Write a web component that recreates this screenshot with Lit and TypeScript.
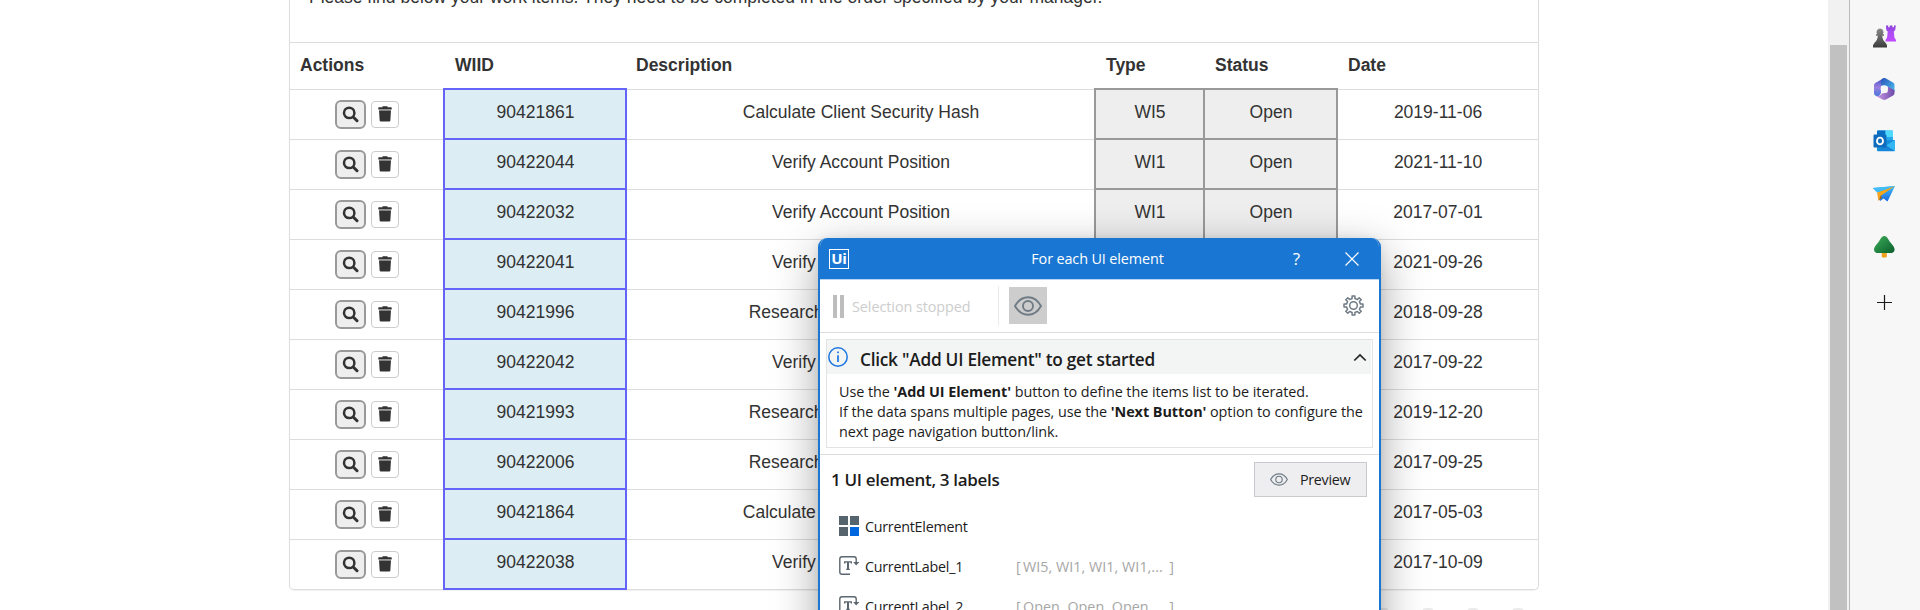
import { LitElement, html, css, svg } from "lit";
import { customElement, property } from "lit/decorators.js";

type Item = { id: string; desc: string; type: string; date: string };

const ITEMS: Item[] = [
  { id: "90421861", desc: "Calculate Client Security Hash", type: "WI5", date: "2019-11-06" },
  { id: "90422044", desc: "Verify Account Position", type: "WI1", date: "2021-11-10" },
  { id: "90422032", desc: "Verify Account Position", type: "WI1", date: "2017-07-01" },
  { id: "90422041", desc: "Verify Account Position", type: "WI1", date: "2021-09-26" },
  { id: "90421996", desc: "Research Client Check Copy", type: "WI3", date: "2018-09-28" },
  { id: "90422042", desc: "Verify Account Position", type: "WI1", date: "2017-09-22" },
  { id: "90421993", desc: "Research Client Check Copy", type: "WI3", date: "2019-12-20" },
  { id: "90422006", desc: "Research Client Check Copy", type: "WI3", date: "2017-09-25" },
  { id: "90421864", desc: "Calculate Client Security Hash", type: "WI5", date: "2017-05-03" },
  { id: "90422038", desc: "Verify Account Position", type: "WI1", date: "2017-10-09" },
];

const eye = (w: number, h: number, sw: number) => html`
  <svg width=${w} height=${h} viewBox="0 0 28 20" fill="none" stroke="#6f7b85" stroke-width=${sw}>
    <path d="M1 10C4 4.6 8.6 1.2 14 1.2S24 4.6 27 10C24 15.400 19.400 18.800 14 18.800S4 15.400 1 10Z" />
    <circle cx="14" cy="10" r="5" />
  </svg>`;

/** Outline of a toothed wheel with the given number of teeth. */
const gearPath = (teeth: number, outer: number, inner: number) => {
  const pts: string[] = [];
  const step = (Math.PI * 2) / teeth;
  for (let i = 0; i < teeth; i++) {
    const a = i * step - Math.PI / 2;
    for (const [off, r] of [[-0.25, inner], [-0.19, outer], [0.19, outer], [0.25, inner]]) {
      const t = a + off * step;
      pts.push(`${(10.5 + Math.cos(t) * r).toFixed(2)} ${(10.5 + Math.sin(t) * r).toFixed(2)}`);
    }
  }
  return `M${pts.join("L")}Z`;
};

@customElement("work-items")
class WorkItems extends LitElement {
  static styles = css`
    :host { display: block; font: 17.5px/25px "Liberation Sans", Arial, sans-serif; color: #333; }
    .panel { border: 1px solid #ddd; border-top: 0; border-radius: 0 0 5px 5px; box-shadow: 0 1px 1px rgba(0, 0, 0, .06); }
    .intro { height: 42px; display: flex; flex-direction: column; justify-content: flex-end; padding: 0 0 32px 19px; box-sizing: border-box; white-space: nowrap; }
    .row { display: grid; grid-template-columns: 154px 182px 469px 109px 133px 201px; height: 50px; }
    .row.head { height: 47px; font-weight: bold; }
    .cell { border-top: 1px solid #ddd; padding: 10px 10px 0 11px; text-align: center; white-space: nowrap; }
    .head .cell { text-align: left; }
    .head .cell:first-child, .head .cell:nth-child(3) { padding-left: 10px; }
    .key { background: #dcedf3; border-top-color: #6464f8; border-bottom: 1px solid #6464f8; box-shadow: 0 0 0 1px #6464f8, inset 1px 0 0 #6464f8, inset -1px 0 0 #6464f8; }
    .label { background: #eee; border-top-color: #999; border-bottom: 1px solid #999; box-shadow: 0 0 0 1px #999, inset 1px 0 0 #999, inset -1px 0 0 #999; }
    .key, .label { position: relative; margin-bottom: 0; }
    .actions { display: flex; gap: 5px; align-items: flex-start; padding: 10px 0 0 45px; }
    .btn { box-sizing: border-box; display: grid; place-items: center; }
    .view { width: 31px; height: 29px; border: 2px solid #999; border-radius: 6px; background: #eee; }
    .del { width: 28px; height: 27px; margin-top: 1px; border: 1px solid #ccc; border-radius: 4px; background: #fff; }
    svg { display: block; margin-top: -1px; }
    .del svg { margin-top: -2px; }
    .pager { display: flex; justify-content: flex-end; gap: 33px; padding: 18px 15px 0 0; }
    .dot { width: 12px; height: 8px; border-radius: 6px; background: #ebebeb; }
  `;
  render() {
    return html`
      <div class="panel">
        <div class="intro">Please find below your work items. They need to be completed in the order specified by your manager.</div>
        <div class="row head">
          ${["Actions", "WIID", "Description", "Type", "Status", "Date"].map((h) => html`<div class="cell">${h}</div>`)}
        </div>
        ${ITEMS.map((i) => html`
          <div class="row">
            <div class="cell actions">
              <span class="btn view">
                <svg width="17" height="17" viewBox="0 0 17 17" fill="none" stroke="#333">
                  <circle cx="7.200" cy="6.900" r="5.200" stroke-width="2.500" />
                  <path d="M11.200 11L15 14.700" stroke-width="3" stroke-linecap="round" />
                </svg>
              </span>
              <span class="btn del">
                <svg width="14" height="16" viewBox="0 0 14 16" fill="#333">
                  <path d="M4.500 1.200V.3h5v.9H13.200q.5 0 .5.800v1.400H.3V2q0-.8.5-.8Z" />
                  <path d="M1 3.400H13V4.400H1Z" fill="#999" />
                  <path d="M1 4.400h12l-.7 10.300q-.1.800-1 .8H2.700q-.9 0-1-.8Z" />
                </svg>
              </span>
            </div>
            <div class="cell key">${i.id}</div>
            <div class="cell">${i.desc}</div>
            <div class="cell label">${i.type}</div>
            <div class="cell label">Open</div>
            <div class="cell">${i.date}</div>
          </div>`)}
      </div>
      <div class="pager">${[0, 1, 2, 3].map(() => html`<i class="dot"></i>`)}</div>`;
  }
}

@customElement("label-row")
class LabelRow extends LitElement {
  @property() name = "";
  @property() sample = "";
  static styles = css`
    :host { display: flex; align-items: center; height: 40px; padding-left: 19px; color: #1c1c1c; font-size: 14.300px; letter-spacing: -.25px; white-space: nowrap; }
    svg { display: block; flex: none; width: 20px; height: 20px; margin-right: 6px; }
    .name { width: 151px; padding-top: 1px; }
    .sample { color: #a6a6a6; width: 158px; display: flex; padding-top: 1px; letter-spacing: .05px; }
    .open { width: 7px; }
    .text { flex: 1; }
  `;
  render() {
    return html`
      ${this.sample
        ? html`<svg viewBox="0 0 20 20" fill="none" stroke="#5b6770" stroke-width="1.400">
            <path d="M11 18.300H3Q.8 18.300.8 16.100V3Q.8.8 3 .8H15Q17.200.8 17.200 3V8" />
            <path d="M14.200 6H20.200L17.200 9.500Z" fill="#5b6770" stroke="none" />
            <path d="M5.700 7.600V5.900H12.300V7.600M7.200 13.400H10.800" />
            <path d="M9 6V13.300" stroke-width="2" />
          </svg>`
        : html`<svg viewBox="0 0 20 20" fill="#56646d">
            <path d="M0 0H9V9H0ZM11 0H20V9H11ZM0 11H9V20H0Z" /><path d="M11 11H20V20H11Z" fill="#0067df" />
          </svg>`}
      <span class="name">${this.name}</span>
      ${this.sample ? html`<span class="sample"><span class="open">[</span><span class="text">${this.sample}</span><span>]</span></span>` : ""}`;
  }
}

@customElement("selection-dialog")
class SelectionDialog extends LitElement {
  static styles = css`
    :host { display: block; box-sizing: border-box; border: 2px solid #1976d2; border-width: 0 2px; border-radius: 9px 9px 0 0; background: #fff; color: #1c1c1c; overflow: hidden; font: 14.400px/20px "Open Sans", "Noto Sans", sans-serif; }
    svg { display: block; flex: none; }
    .title { height: 41px; background: #1976d2; border-bottom: 1px solid #b8d4f0; color: #fff; display: grid; grid-template-columns: 1fr auto 1fr; align-items: center; letter-spacing: -.12px; }
    .logo { box-sizing: border-box; width: 20px; height: 20px; margin-left: 9px; border: 1.500px solid #fff; font: bold 15px/17px "Open Sans", sans-serif; text-align: center; letter-spacing: -.3px; }
    .heading { padding: 1px 4px 0 0; }
    .controls { display: flex; justify-content: flex-end; align-items: center; padding-right: 20px; gap: 45px; font-size: 17px; }
    .toolbar { height: 52px; border-bottom: 1px solid #ddd; display: flex; align-items: center; }
    .pause { width: 3px; height: 23px; border: solid #bdbdbd; border-width: 0 4px; margin-left: 13px; }
    .stopped { width: 146px; margin: 1px 0 0 8px; color: #cdcdcd; letter-spacing: -.065px; }
    .sep { width: 1px; height: 40px; background: #ebebeb; }
    .eye { width: 38px; height: 37px; margin: -1px auto 0 10px; background: #cdcdcd; display: grid; place-items: center; }
    .gear { margin: -1px 15px 0 0; }
    .info { margin: 6px 6px 0; height: 107px; border: 1px solid #e2e3e4; }
    .infohead { height: 34px; background: #f3f5f5; margin: 0 1px 0 0; display: flex; align-items: center; font-size: 17.300px; font-weight: 600; letter-spacing: -.265px; }
    .infohead .t { margin: 5px auto 0 11px; }
    .chev { margin-right: 4px; }
    .body { padding: 8px 0 0 12px; letter-spacing: -.06px; white-space: nowrap; }
    .body div { height: 20px; }
    b { letter-spacing: -.04px; }
    .summary { margin-top: 6px; border-top: 1px solid #ddd; height: 52px; display: flex; align-items: center; justify-content: space-between; padding: 0 12px 0 11px; box-sizing: border-box; }
    .count { font-size: 17px; font-weight: 600; letter-spacing: -.32px; margin-top: -2px; }
    .preview { box-sizing: border-box; width: 113px; height: 35px; border: 1px solid #c9cacd; background: #eeeef0; display: flex; align-items: center; padding: 1px 0 0 15px; gap: 12px; font-size: 14.300px; letter-spacing: -.3px; margin-top: -3px; }
    .list { display: flex; flex-direction: column; }
  `;
  render() {
    return html`
      <div class="title">
        <span class="logo">Ui</span>
        <span class="heading">For each UI element</span>
        <span class="controls">
          <span>?</span>
          <svg width="14" height="14" viewBox="0 0 14 14" stroke="#fff" stroke-width="1.200"><path d="M.5.5L13.500 13.500M13.500.5L.5 13.500" /></svg>
        </span>
      </div>
      <div class="toolbar">
        <span class="pause"></span><span class="stopped">Selection stopped</span><span class="sep"></span>
        <span class="eye">${eye(28, 20, 1.9)}</span>
        <svg class="gear" width="21" height="21" viewBox="0 0 21 21" fill="none" stroke="#6f7b85" stroke-width="1.500">
          <path d=${gearPath(8, 9.6, 7.1)} stroke-linejoin="round" /><circle cx="10.500" cy="10.500" r="3.800" />
        </svg>
      </div>
      <div class="info">
        <div class="infohead">
          <svg width="22" height="22" viewBox="0 0 22 22" fill="none" stroke="#1a75e0" stroke-width="1.500">
            <circle cx="11" cy="11" r="9.200" /><path d="M11 9.200V16M11 5.500V7.300" stroke-width="1.700" />
          </svg>
          <span class="t">Click "Add UI Element" to get started</span>
          <svg class="chev" width="14" height="10" viewBox="0 0 14 10" fill="none" stroke="#222" stroke-width="1.700"><path d="M1.300 8.500L7 2.900L12.700 8.500" /></svg>
        </div>
        <div class="body">
          <div>Use the <b>'Add UI Element'</b> button to define the items list to be iterated.</div>
          <div>If the data spans multiple pages, use the <b>'Next Button'</b> option to configure the</div>
          <div>next page navigation button/link.</div>
        </div>
      </div>
      <div class="summary">
        <span class="count">1 UI element, 3 labels</span>
        <span class="preview">${eye(18, 13, 1.8)}<span>Preview</span></span>
      </div>
      <div class="list">
        <label-row name="CurrentElement"></label-row>
        <label-row name="CurrentLabel_1" sample="WI5, WI1, WI1, WI1,..."></label-row>
        <label-row name="CurrentLabel_2" sample="Open, Open, Open,..."></label-row>
      </div>`;
  }
}

const SIDEBAR = [
  svg`<linearGradient id="pk" x2="0" y2="1"><stop stop-color="#8a8a8a"/><stop offset="1" stop-color="#3c3c3c"/></linearGradient>
    <linearGradient id="rk" x2="0" y2="1"><stop stop-color="#8b3fd9"/><stop offset=".4" stop-color="#a94df2"/><stop offset="1" stop-color="#c14bff"/></linearGradient>
    <path d="M14 .5h2.200v1.800h1.600V.5h2.600v1.800H22V.5h1.800l-.6 4.700-1.400 1.200.6 6 1.600 2.600v1.500H13.500V15l1.600-2.600.6-6-1.400-1.200Z" fill="url(#rk)"/>
    <path d="M8 3.500a3.500 3.500 0 0 1 2.700 5.700h1.300v1.600h-1.700c.1 2.900.9 5 3 6.700.9.800 1.300 1.500 1.300 2.300h.4v2.700H1v-2.700h.5c0-.8.4-1.500 1.300-2.300 2-1.700 2.900-3.800 3-6.700H4V9.200h1.300A3.500 3.500 0 0 1 8 3.500Z" fill="url(#pk)"/>`,
  svg`<linearGradient id="m1" x2="1" y2="1"><stop stop-color="#2a50b8"/><stop offset="1" stop-color="#4bc3f0"/></linearGradient>
    <linearGradient id="m2" x2="0" y2="1"><stop stop-color="#3d50c4"/><stop offset=".5" stop-color="#9b7fe0"/><stop offset="1" stop-color="#3f76dc"/></linearGradient>
    <linearGradient id="m3" x2="1" y2="0"><stop stop-color="#cf9be6"/><stop offset="1" stop-color="#6c4bab"/></linearGradient>
    <path d="M12 1L3.300 6Q2 6.800 2 8.400v7.800q0 1.500 1.300 2.300l3.200 1.300L9 16V9l4-8Z" fill="url(#m2)"/>
    <path d="M11 1.300q1.300-.6 2.600 0L21 5.600q1.500.9 1.500 2.500V15L15.500 9.500 9 8.500V4Q9 2.300 11 1.300Z" fill="url(#m1)"/>
    <path d="M22.500 13v3q0 1.600-1.400 2.400L14 22.600q-1.700.9-3.400 0L4 19q4 .5 6-2.500l5.500-1V9.500L22.500 13Z" fill="url(#m3)"/>
    <circle cx="12.300" cy="12" r="3.700" fill="#f7f7f7"/>`,
  svg`<rect x="5" y="1.500" width="16" height="14" rx="1" fill="#28a8ea"/><path d="M5 2.500q0-1 1-1h7.500V8H5Z" fill="#0a6fc4"/><path d="M13.500 1.500H20q1 0 1 1V8h-7.500Z" fill="#50d9ff"/>
    <path d="M5 11l18 0V21q0 1.200-1.200 1.200H6q-1 0-1-1Z" fill="#1490df"/><path d="M23 11L14 16.500 23 22Z" fill="#33b6f2"/><path d="M14 16.500L5 22h17.500Z" fill="#1685d8"/>
    <rect x="1.500" y="5.500" width="13" height="13" rx="1.200" fill="#0f6cbd"/><ellipse cx="8" cy="12" rx="3" ry="3.400" fill="none" stroke="#fff" stroke-width="1.900"/>`,
  svg`<linearGradient id="pl" x2="0" y2="1"><stop stop-color="#45bdf5"/><stop offset="1" stop-color="#1769e0"/></linearGradient>
    <path d="M.8 6L23 4 15.500 19.500 11.500 16.500 8 19V12.500Z" fill="url(#pl)"/><path d="M23 4L5 10.500 6.500 19 8.500 14Z" fill="#f2a51d"/><path d="M6.500 19L10 15.500 8.500 13.500Z" fill="#a8660e"/><path d="M.8 6L23 4 5 10.500Z" fill="#42bcf6"/>`,
  svg`<linearGradient id="tr" x2="1" y2="1"><stop stop-color="#43ad57"/><stop offset=".5" stop-color="#228743"/><stop offset="1" stop-color="#0d5e2b"/></linearGradient>
    <rect x="9.800" y="16" width="5" height="6.500" rx="1" fill="#f0a21c"/>
    <path d="M12.300 1C9.500 1 8.600 4.400 6.300 7.200 3.600 10.600 2 12.300 2 14.400 2 17 4 18 6.300 18h12c2.300 0 4.300-1 4.300-3.600 0-2.100-1.600-3.800-4.300-7.200C16 4.400 15.100 1 12.300 1Z" fill="url(#tr)"/>`,
  svg`<path d="M12.500 5v15M5 12.500h15" stroke="#1a1a1a" stroke-width="1.200"/>`,
];

@customElement("browser-edge")
class BrowserEdge extends LitElement {
  static styles = css`
    :host { display: flex; height: 610px; }
    .track { width: 21px; background: #f1f1f1; box-sizing: border-box; padding: 45px 2px 0; }
    .thumb { height: 565px; background: #c1c1c1; }
    .bar { flex: 1; background: #f7f7f7; border-left: 1px solid #bbb; display: flex; flex-direction: column; align-items: center; gap: 28.700px; padding: 24px 2px 0 0; }
    svg { display: block; width: 24px; height: 24px; }
    svg:first-child { margin: 1px 0 -1px; }
    svg:last-child { margin-top: 3px; }
  `;
  render() {
    return html`
      <div class="track"><div class="thumb"></div></div>
      <div class="bar">${SIDEBAR.map((s) => html`<svg viewBox="0 0 24 24">${s}</svg>`)}</div>`;
  }
}

@customElement("app-root")
class AppRoot extends LitElement {
  static styles = css`
    :host { display: flex; position: relative; height: 610px; overflow: hidden; background: #fff; }
    .page { width: 1828px; display: flex; justify-content: center; }
    work-items { width: 1250px; }
    browser-edge { flex: 1; }
    selection-dialog { position: absolute; left: 818px; top: 238px; width: 563px; height: 500px; box-shadow: 0 14px 45px rgba(0, 0, 0, .36), 0 0 8px rgba(0, 0, 0, .08); }
  `;
  render() {
    return html`
      <div class="page"><work-items></work-items></div>
      <browser-edge></browser-edge>
      <selection-dialog></selection-dialog>`;
  }
}
